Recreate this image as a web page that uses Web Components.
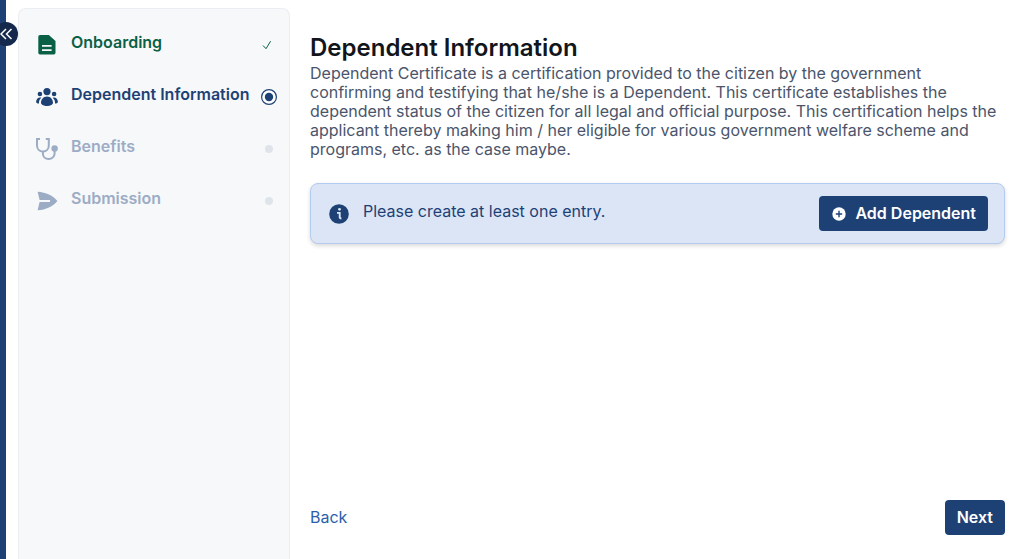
<!DOCTYPE html>
<html lang="en">
<head>
<meta charset="UTF-8">
<meta name="viewport" content="width=device-width, initial-scale=1">
<title>Dependent Information</title>
<style>
    body {
        margin: 0;
        background: #fff;
        font-family: Inter, "Liberation Sans", sans-serif;
        font-size: 16px;
        line-height: 19px;
        --navy: #1e4175;
        --green: #0a6045;
        --muted: #9dacc5;
    }
</style>
</head>
<body>
<app-shell>
    <side-rail slot="rail"></side-rail>
    <step-list slot="steps">
        <step-item icon="document" state="done">Onboarding</step-item>
        <step-item icon="people" state="current">Dependent Information</step-item>
        <step-item icon="stethoscope" state="pending">Benefits</step-item>
        <step-item icon="send" state="pending">Submission</step-item>
    </step-list>
    <page-intro heading="Dependent Information">Dependent Certificate is a certification provided to the citizen by the government confirming and testifying that he/she is a Dependent. This certificate establishes the dependent status of the citizen for all legal and official purpose. This certification helps the applicant thereby making him / her eligible for various government welfare scheme and programs, etc. as the case maybe.</page-intro>
    <info-alert>
        Please create at least one entry.
        <app-button slot="action" icon="plus">Add Dependent</app-button>
    </info-alert>
    <page-actions slot="footer"></page-actions>
</app-shell>

<script>
const ICONS = {
    document: `<svg viewBox="0 0 22 22" fill="currentColor" aria-hidden="true"><path fill-rule="evenodd" d="M4 1H12.8L19.5 7v11.8q0 1.7-1.7 1.7H4q-1.7 0-1.7-1.7V2.7Q2.3 1 4 1zM6 11v1.7H15.6V11zm0 4.2v1.7H15.6v-1.7z"/></svg>`,
    people: `<svg viewBox="0 0 22 22" fill="currentColor" aria-hidden="true">
        <circle cx="11" cy="5.6" r="3.6"/><circle cx="3.9" cy="8" r="2.3"/><circle cx="18.1" cy="8" r="2.3"/>
        <path d="M11 10.6c3.6 0 6 3 6 6.2 0 2-3 3.2-6 3.2s-6-1.2-6-3.2c0-3.2 2.4-6.2 6-6.2z"/>
        <path d="M5.3 11.7c-3-.8-5.2 1.5-5.2 4.3 0 .9 1.1 1.5 2.9 1.6-.3-2.4.7-4.5 2.3-5.9zM16.7 11.7c3-.8 5.2 1.5 5.2 4.3 0 .9-1.1 1.5-2.9 1.6.3-2.4-.7-4.5-2.3-5.9z"/></svg>`,
    stethoscope: `<svg viewBox="0 0 22 22" fill="none" stroke="currentColor" stroke-width="2" aria-hidden="true">
        <path d="M4 1H1v6.5c0 3.5 2.5 6 5.9 6s5.9-2.5 5.9-6V1H9.8"/>
        <path d="M6.9 13.5v2.2c0 3 2.5 5.3 5.8 5.3s5.9-2.5 5.9-5.5v-3"/>
        <circle cx="18.6" cy="10.5" r="3.2" fill="currentColor" stroke="none"/></svg>`,
    send: `<svg viewBox="0 0 22 22" fill="currentColor" aria-hidden="true"><path d="M1.6 1.7C10 2.2 17 5.5 21.4 11 17 16.5 10 19.8 1.6 20.3L3.6 12H14V10H3.6z"/></svg>`,
    info: `<svg viewBox="0 0 20 20" aria-hidden="true"><circle cx="10" cy="10" r="9.8" fill="currentColor"/>
        <circle cx="10.5" cy="5.3" r="1.4" fill="#dbe5f5"/><path d="M8 8.9h2.7v4.200q0 1.400 1.700 1.400" fill="none" stroke="#dbe5f5" stroke-width="1.900"/></svg>`,
    plus: `<svg viewBox="0 0 14 14" aria-hidden="true"><circle cx="7" cy="7" r="6.7" fill="currentColor"/><path d="M7 3.8v6.4M3.8 7h6.4" stroke="#1e4175" stroke-width="1.4"/></svg>`,
    chevrons: `<svg viewBox="0 0 14 14" fill="none" stroke="currentColor" stroke-width="1.5" aria-hidden="true"><path d="M7 2L2 7l5 5M12.5 2l-5 5 5 5"/></svg>`,
    done: `<svg viewBox="0 0 16 16" fill="none" stroke="currentColor" stroke-width="1" aria-hidden="true"><path d="M2 8.5l3 3.2L9.6 4.2"/></svg>`,
    current: `<svg viewBox="0 0 16 16" aria-hidden="true"><circle cx="8" cy="8" r="7.4" fill="#fff" stroke="currentColor" stroke-width="1.2"/><circle cx="8" cy="8" r="4.2" fill="currentColor"/></svg>`,
    pending: `<svg viewBox="0 0 16 16" aria-hidden="true"><circle cx="8" cy="8" r="4" fill="#dfe4eb"/></svg>`
};

class AppShell extends HTMLElement {
    constructor() {
        super();
        this.attachShadow({ mode: 'open' }).innerHTML = `
        <style>
            :host {
                display: flex;
                min-height: 100vh;
            }
            main {
                flex: 1;
                min-width: 0;
                box-sizing: border-box;
                display: flex;
                flex-direction: column;
                gap: 24px;
                padding: 33px 19px 24px 20px;
            }
            footer { margin-top: auto; }
        </style>
        <slot name="rail"></slot>
        <slot name="steps"></slot>
        <main>
            <slot></slot>
            <footer><slot name="footer"></slot></footer>
        </main>`;
    }
}

class SideRail extends HTMLElement {
    constructor() {
        super();
        this.attachShadow({ mode: 'open' }).innerHTML = `
        <style>
            :host {
                display: block;
                position: relative;
                flex: none;
                width: 6px;
                background: var(--navy);
            }
            /* the toggle overlaps the edge of the rail */
            button {
                position: absolute;
                top: 22px;
                left: -6px;
                display: flex;
                align-items: center;
                justify-content: center;
                width: 24px;
                height: 24px;
                padding: 0;
                border: 0;
                border-radius: 50%;
                background: #14294b;
                color: #fff;
                cursor: pointer;
            }
            svg { width: 14px; height: 14px; }
        </style>
        <button type="button" aria-label="Collapse menu">${ICONS.chevrons}</button>`;
    }
}

class StepList extends HTMLElement {
    constructor() {
        super();
        this.attachShadow({ mode: 'open' }).innerHTML = `
        <style>
            :host {
                display: block;
                flex: none;
                box-sizing: border-box;
                width: 272px;
                margin: 8px 0 0 12px;
                padding: 10px 12px 0 17px;
                border: 1px solid #eaedf1;
                border-bottom: 0;
                border-radius: 8px 8px 0 0;
                background: #f7f8fa;
            }
        </style>
        <nav aria-label="Steps"><slot></slot></nav>`;
    }
}

class StepItem extends HTMLElement {
    constructor() {
        super();
        this.attachShadow({ mode: 'open' });
    }

    connectedCallback() {
        const state = this.getAttribute('state') || 'pending';
        const colors = {
            done: 'var(--green)',
            current: 'var(--navy)',
            pending: 'var(--muted)'
        };

        this.shadowRoot.innerHTML = `
        <style>
            :host {
                display: flex;
                align-items: center;
                height: 52px;
                color: ${colors[state]};
                font-weight: 600;
            }
            .icon {
                flex: none;
                width: 22px;
                height: 22px;
                margin-right: 13px;
            }
            .label {
                flex: 1;
                padding-bottom: 5px;
                white-space: nowrap;
            }
            .status {
                flex: none;
                width: 16px;
                height: 16px;
            }
            svg { display: block; width: 100%; height: 100%; }
        </style>
        <span class="icon">${ICONS[this.getAttribute('icon')]}</span>
        <span class="label"><slot></slot></span>
        <span class="status">${ICONS[state]}</span>`;
    }
}

class PageIntro extends HTMLElement {
    constructor() {
        super();
        this.attachShadow({ mode: 'open' });
    }

    connectedCallback() {
        this.shadowRoot.innerHTML = `
        <style>
            :host { display: block; }
            h1 {
                margin: 0 0 1px;
                color: #12161c;
                font-size: 24px;
                font-weight: 600;
                line-height: 30px;
            }
            p {
                margin: 0;
                color: #4a556b;
                font-weight: 400;
            }
        </style>
        <h1>${this.getAttribute('heading')}</h1>
        <p><slot></slot></p>`;
    }
}

class InfoAlert extends HTMLElement {
    constructor() {
        super();
        this.attachShadow({ mode: 'open' }).innerHTML = `
        <style>
            :host {
                display: flex;
                align-items: center;
                padding: 12px 16px 12px 18px;
                border: 1px solid #b3cbee;
                border-radius: 8px;
                background: #dbe5f5;
                box-shadow: 0 2px 4px rgba(0, 0, 0, 0.15);
                color: var(--navy);
            }
            svg {
                flex: none;
                width: 20px;
                height: 20px;
                margin-right: 14px;
            }
            .text {
                flex: 1;
                padding-bottom: 4px;
            }
        </style>
        ${ICONS.info}
        <span class="text"><slot></slot></span>
        <slot name="action"></slot>`;
    }
}

class AppButton extends HTMLElement {
    constructor() {
        super();
        this.attachShadow({ mode: 'open' });
    }

    connectedCallback() {
        const icon = ICONS[this.getAttribute('icon')] || '';

        this.shadowRoot.innerHTML = `
        <style>
            :host { display: block; }
            button {
                display: flex;
                align-items: center;
                gap: 9px;
                padding: 8px 12px;
                border: 0;
                border-radius: 4px;
                background: var(--navy);
                color: #fff;
                font: inherit;
                font-weight: 600;
                cursor: pointer;
            }
            svg { width: 14px; height: 14px; margin-left: 1px; }
        </style>
        <button type="button">${icon}<slot></slot></button>`;
    }
}

class PageActions extends HTMLElement {
    constructor() {
        super();
        this.attachShadow({ mode: 'open' }).innerHTML = `
        <style>
            :host {
                display: flex;
                align-items: center;
                justify-content: space-between;
            }
            a {
                color: #2c5faa;
                text-decoration: none;
            }
        </style>
        <a href="#">Back</a>
        <app-button>Next</app-button>`;
    }
}

customElements.define('app-shell', AppShell);
customElements.define('side-rail', SideRail);
customElements.define('step-list', StepList);
customElements.define('step-item', StepItem);
customElements.define('page-intro', PageIntro);
customElements.define('info-alert', InfoAlert);
customElements.define('app-button', AppButton);
customElements.define('page-actions', PageActions);
</script>
</body>
</html>
